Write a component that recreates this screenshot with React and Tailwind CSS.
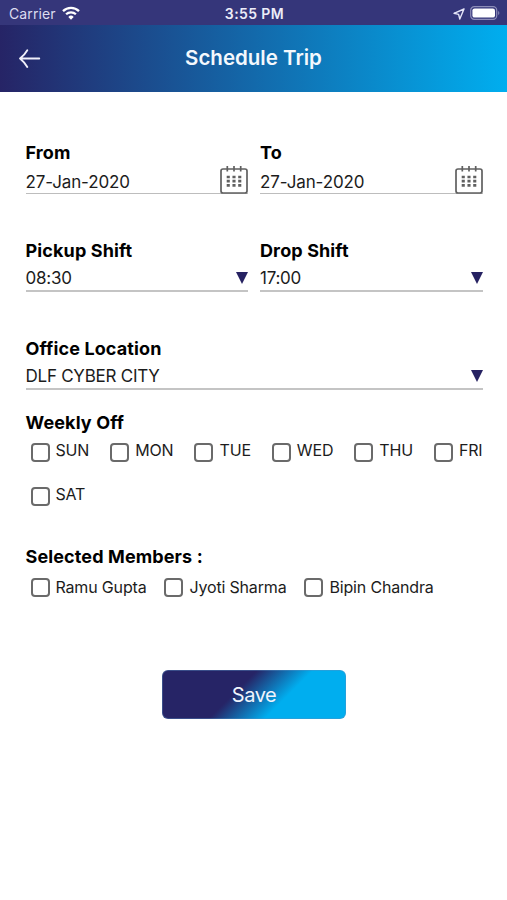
import React, { useState } from 'react';

const DAYS = ['SUN', 'MON', 'TUE', 'WED', 'THU', 'FRI', 'SAT'];
const MEMBERS = ['Ramu Gupta', 'Jyoti Sharma', 'Bipin Chandra'];

function CalendarIcon() {
  return (
    <svg className="-mb-[0.5px]" width="28" height="29" viewBox="0 0 28 29" fill="none" stroke="#606060" strokeWidth="1.7">
      <rect x="1" y="4" width="26" height="24" rx="2" />
      <path d="M7.3 1v5.6M14 1v5.6M20.7 1v5.6" />
      <path d="M6.7 12h14.6M6.7 16.2h14.6M6.7 20.4h14.6" strokeWidth="2.7" strokeDasharray="3.1 2.65" />
    </svg>
  );
}

function TriangleIcon() {
  return (
    <svg width="12" height="12" viewBox="0 0 12 12" fill="#262262">
      <path d="M0 0h12L6 12z" />
    </svg>
  );
}

function StatusBar() {
  return (
    <div className="grid h-[25px] grid-cols-3 items-center bg-[#35367a] pr-[7px] pl-[9px] text-[13px] text-white">
      <div className="flex items-center gap-[6px] pt-[3px]">
        <span className="text-[14px] leading-none tracking-[0.1px] text-[#dcdcf0]">Carrier</span>
        <svg className="-mt-[2px]" width="18" height="14" viewBox="0 0 18 14" fill="none" stroke="white" strokeWidth="2.3">
          <path d="M1 5.1a11.4 11.4 0 0 1 16 0" />
          <path d="M4.1 8.3a7 7 0 0 1 9.8 0" />
          <path d="M9 13.8l-2.7-2.9a3.9 3.9 0 0 1 5.4 0z" fill="white" stroke="none" />
        </svg>
      </div>
      <span className="pt-[3px] text-center text-[14px] leading-none font-semibold tracking-[0.4px] text-[#ececf8]">3:55 PM</span>
      <div className="flex items-center justify-end gap-[5px] pt-[2px]">
        <svg width="12" height="12" viewBox="0 0 12 12" fill="none" stroke="#e4e4f8" strokeWidth="1.4" strokeLinejoin="round">
          <path d="M11 1L1 5.3l4.6 1.1L6.8 11z" />
        </svg>
        <svg className="-mt-[1px]" width="30" height="14" viewBox="0 0 30 14">
          <rect x="0.7" y="0.7" width="26" height="12.6" rx="3.6" fill="none" stroke="#8d8db8" strokeWidth="1.2" />
          <rect x="2.4" y="2.4" width="22.6" height="9.2" rx="2.2" fill="white" />
          <path d="M28.2 5v4c1.5-.7 1.5-3.3 0-4z" fill="#8d8db8" />
        </svg>
      </div>
    </div>
  );
}

function Header() {
  return (
    <header className="grid h-[67px] grid-cols-[1fr_auto_1fr] items-center bg-linear-to-r/srgb from-[#262466] to-[#00aeef] px-[19px]">
      <button type="button" aria-label="Back">
        <svg width="22" height="20" viewBox="0 0 22 20" fill="none" stroke="#f0f0fa" strokeWidth="1.8" strokeLinecap="round" strokeLinejoin="round">
          <path d="M20.3 9.5H1M8.3 1.2C6.5 4.5 4 7 1 9.5c3 2.500 5.500 5 7.300 8.500" />
        </svg>
      </button>
      <h1 className="text-[20.5px] font-semibold text-[#f4f8fd]">Schedule Trip</h1>
    </header>
  );
}

function Label({ children }) {
  return <div className="text-[18px] leading-6 font-bold tracking-[0.12px] text-black">{children}</div>;
}

function DateField({ label, value }) {
  return (
    <div className="flex-1">
      <Label>{label}</Label>
      <div className="flex h-[29px] items-end justify-between border-b-[1.5px] border-[#bdbdbd]">
        <span className="text-[17px] leading-[22px] tracking-[-0.12px] text-[#1c1c1c]">{value}</span>
        <CalendarIcon />
      </div>
    </div>
  );
}

function SelectField({ label, value }) {
  return (
    <div className="flex-1">
      <Label>{label}</Label>
      <div className="flex h-[29px] items-center justify-between border-b-2 border-[#c4c4c4] pt-[2px]">
        <span className="text-[17px] leading-[22px] tracking-[-0.25px] text-[#1c1c1c]">{value}</span>
        <TriangleIcon />
      </div>
    </div>
  );
}

function CheckItem({ label, checked, onChange, className = 'items-center' }) {
  return (
    <label className={`flex gap-[6px] ${className}`}>
      <input
        type="checkbox"
        checked={checked}
        onChange={onChange}
        className="size-[19px] appearance-none rounded-[4px] border-2 border-[#6a6a6a] checked:bg-[#262262]"
      />
      <span className="text-[16px] leading-5 tracking-[-0.17px] text-[#1c1c1c]">{label}</span>
    </label>
  );
}

export default function App() {
  const [selected, setSelected] = useState([]);

  function toggle(name) {
    setSelected((prev) => (prev.includes(name) ? prev.filter((n) => n !== name) : [...prev, name]));
  }

  return (
    <div className="min-h-screen bg-white font-['Inter',sans-serif]">
      <StatusBar />
      <Header />

      <main className="pt-[49px] pr-[24.5px] pl-[25.5px]">
        <div className="flex gap-3">
          <DateField label="From" value="27-Jan-2020" />
          <DateField label="To" value="27-Jan-2020" />
        </div>

        <div className="mt-[45px] flex gap-3">
          <SelectField label="Pickup Shift" value="08:30" />
          <SelectField label="Drop Shift" value="17:00" />
        </div>

        <div className="mt-[45px] flex">
          <SelectField label="Office Location" value="DLF CYBER CITY" />
        </div>

        <div className="mt-[21px]">
          <Label>Weekly Off</Label>
          <div className="mt-[5px] flex flex-wrap justify-between gap-x-4 gap-y-[21.5px] pl-[5px]">
            {DAYS.map((day) => (
              <CheckItem
                key={day}
                label={day}
                checked={selected.includes(day)}
                onChange={() => toggle(day)}
                className="items-end [&>span]:mb-[2px]"
              />
            ))}
          </div>
        </div>

        <div className="mt-[39.5px]">
          <Label>Selected Members :</Label>
          <div className="mt-[8px] flex gap-[18px] pl-[5px]">
            {MEMBERS.map((name) => (
              <CheckItem key={name} label={name} checked={selected.includes(name)} onChange={() => toggle(name)} />
            ))}
          </div>
        </div>

        <div className="mt-[73px] flex justify-center">
          <button
            type="button"
            className="h-[49px] w-[184px] rounded-md border border-[#5a8fc0]/40 bg-[linear-gradient(135deg,#262466_41%,#00aeef_65%)] bg-origin-border text-[20px] tracking-[-0.5px] text-[#f0f4fc]"
          >
            Save
          </button>
        </div>
      </main>
    </div>
  );
}
